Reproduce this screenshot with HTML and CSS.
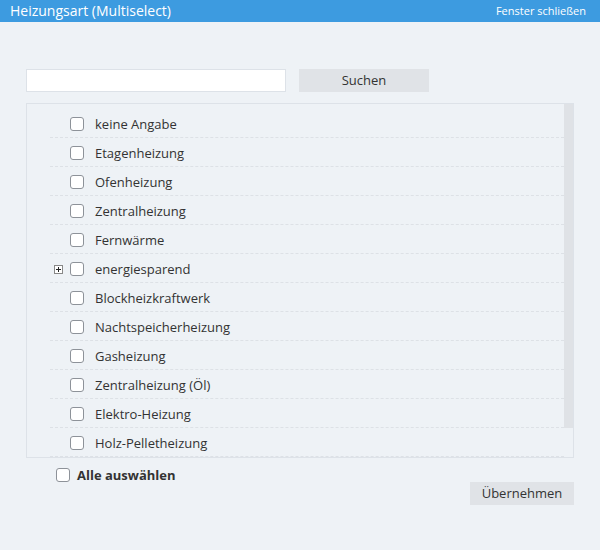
FILE: index.html
```html
<!DOCTYPE html>
<html lang="de">
<head>
<meta charset="utf-8">
<title>Heizungsart (Multiselect)</title>
<link rel="stylesheet" href="styles.css">
</head>
<body>
<header class="titlebar">
  <span class="title">Heizungsart (Multiselect)</span>
  <a class="close-link">Fenster schließen</a>
</header>
<main class="content">
  <div class="search-row">
    <input class="search-input" type="text">
    <button class="btn btn-search">Suchen</button>
  </div>
  <div class="listbox">
    <ul class="items">
      <li class="item"><span class="expander"></span><span class="cb"></span><span class="label">keine Angabe</span></li>
      <li class="item"><span class="expander"></span><span class="cb"></span><span class="label">Etagenheizung</span></li>
      <li class="item"><span class="expander"></span><span class="cb"></span><span class="label">Ofenheizung</span></li>
      <li class="item"><span class="expander"></span><span class="cb"></span><span class="label">Zentralheizung</span></li>
      <li class="item"><span class="expander"></span><span class="cb"></span><span class="label">Fernwärme</span></li>
      <li class="item"><span class="expander"><span class="plus"></span></span><span class="cb"></span><span class="label">energiesparend</span></li>
      <li class="item"><span class="expander"></span><span class="cb"></span><span class="label">Blockheizkraftwerk</span></li>
      <li class="item"><span class="expander"></span><span class="cb"></span><span class="label">Nachtspeicherheizung</span></li>
      <li class="item"><span class="expander"></span><span class="cb"></span><span class="label">Gasheizung</span></li>
      <li class="item"><span class="expander"></span><span class="cb"></span><span class="label">Zentralheizung (Öl)</span></li>
      <li class="item"><span class="expander"></span><span class="cb"></span><span class="label">Elektro-Heizung</span></li>
      <li class="item"><span class="expander"></span><span class="cb"></span><span class="label">Holz-Pelletheizung</span></li>
    </ul>
    <div class="scrolltrack"><div class="scrollthumb"></div></div>
  </div>
  <div class="footer">
    <label class="select-all"><span class="cb"></span><span class="select-all-label">Alle auswählen</span></label>
    <button class="btn btn-apply">Übernehmen</button>
  </div>
</main>
</body>
</html>
```
FILE: styles.css
```css
html, body {
  margin: 0;
  padding: 0;
}
body {
  background: #eef2f6;
  font-family: "Open Sans", "Liberation Sans", sans-serif;
  color: #333;
  width: 600px;
  height: 550px;
}
.titlebar {
  height: 22px;
  background: #3d9be0;
  color: #fff;
  display: flex;
  align-items: center;
  justify-content: space-between;
  padding: 0 14px 0 10px;
}
.title {
  font-size: 14px;
  line-height: 22px;
}
.close-link {
  font-size: 11px;
  line-height: 22px;
  color: #fff;
}
.content {
  padding: 47px 26px 0 26px;
}
.search-row {
  display: flex;
  gap: 13px;
  height: 23px;
}
.search-input {
  box-sizing: border-box;
  width: 260px;
  height: 23px;
  margin: 0;
  border: 1px solid #dde2e8;
  background: #fff;
  outline: none;
}
.btn {
  box-sizing: border-box;
  border: none;
  background: #e0e3e7;
  color: #333;
  font-family: "Open Sans", "Liberation Sans", sans-serif;
  font-size: 13px;
  line-height: 18px;
  padding: 0 0 2px 0;
  margin: 0;
  height: 23px;
}
.btn-search {
  width: 130px;
}
.listbox {
  margin-top: 11px;
  box-sizing: border-box;
  width: 548px;
  height: 355px;
  border: 1px solid #dde2e8;
  display: flex;
}
.items {
  list-style: none;
  margin: 0;
  padding: 5px 0 0 23px;
  flex: 1;
}
.item {
  height: 26px;
  padding-top: 2px;
  border-bottom: 1px dashed #dde1e6;
  display: flex;
  align-items: center;
  font-size: 13px;
}
.expander {
  width: 20px;
  display: flex;
  align-items: center;
}
.plus {
  margin-left: 4px;
  width: 7px;
  height: 7px;
  border: 1px solid #888;
  background: #fff;
  position: relative;
}
.plus::before,
.plus::after {
  content: "";
  position: absolute;
  background: #222;
}
.plus::before {
  left: 1px;
  top: 3px;
  width: 5px;
  height: 1px;
}
.plus::after {
  left: 3px;
  top: 1px;
  width: 1px;
  height: 5px;
}
.cb {
  box-sizing: border-box;
  width: 14px;
  height: 14px;
  border: 1px solid #8d9299;
  border-radius: 3px;
  background: #fff;
  flex: none;
}
.label {
  margin-left: 11px;
}
.scrolltrack {
  width: 9px;
}
.scrollthumb {
  height: 324px;
  background: #dfe2e6;
}
.footer {
  display: flex;
  justify-content: space-between;
  align-items: flex-start;
}
.select-all {
  display: flex;
  align-items: center;
  margin-top: 8px;
  padding-left: 30px;
  font-size: 13px;
  font-weight: bold;
}
.select-all-label {
  margin-left: 7px;
}
.btn-apply {
  margin-top: 24px;
  width: 104px;
}
```
